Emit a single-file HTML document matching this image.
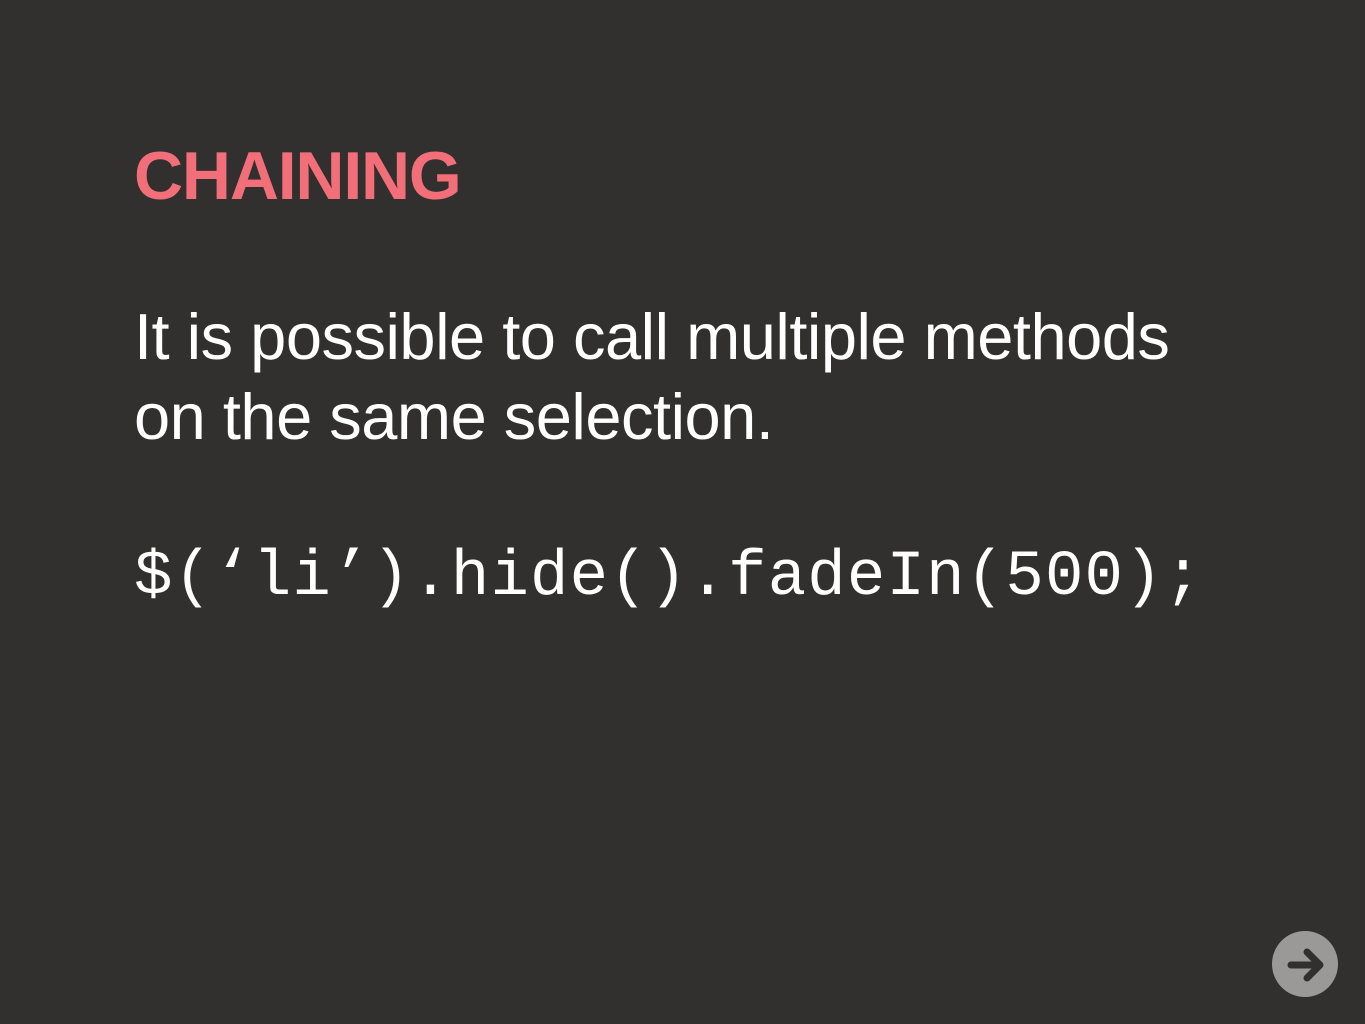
<!DOCTYPE html>
<html><head><style>
html,body{margin:0;padding:0}
body{width:1365px;height:1024px;background:#31302f;position:relative;overflow:hidden;font-family:"Liberation Sans",sans-serif}
.t{position:absolute;left:134px;top:136px;font-size:68px;font-weight:bold;color:#f26e78;line-height:80px;letter-spacing:-1.2px}
.b{position:absolute;left:134px;top:297px;font-size:65px;color:#fff;line-height:80px;letter-spacing:-0.5px}
.c{position:absolute;left:134px;top:538px;font-family:"Liberation Mono",monospace;font-size:64px;color:#fff;line-height:80px;letter-spacing:1.2px;font-weight:300}
</style></head><body>
<div class="t">CHAINING</div>
<div class="b">It is possible to call multiple methods<br>on the same selection.</div>
<div class="c">$(‘li’).hide().fadeIn(500);</div>
<svg style="position:absolute;left:1271px;top:930px" width="68" height="68" viewBox="0 0 68 68">
<circle cx="34" cy="34" r="33" fill="#9a9998"/>
<path d="M20 35H47M36 22L49 35L36 48" fill="none" stroke="#31302f" stroke-width="7" stroke-linecap="round" stroke-linejoin="round"/>
</svg>
</body></html>
